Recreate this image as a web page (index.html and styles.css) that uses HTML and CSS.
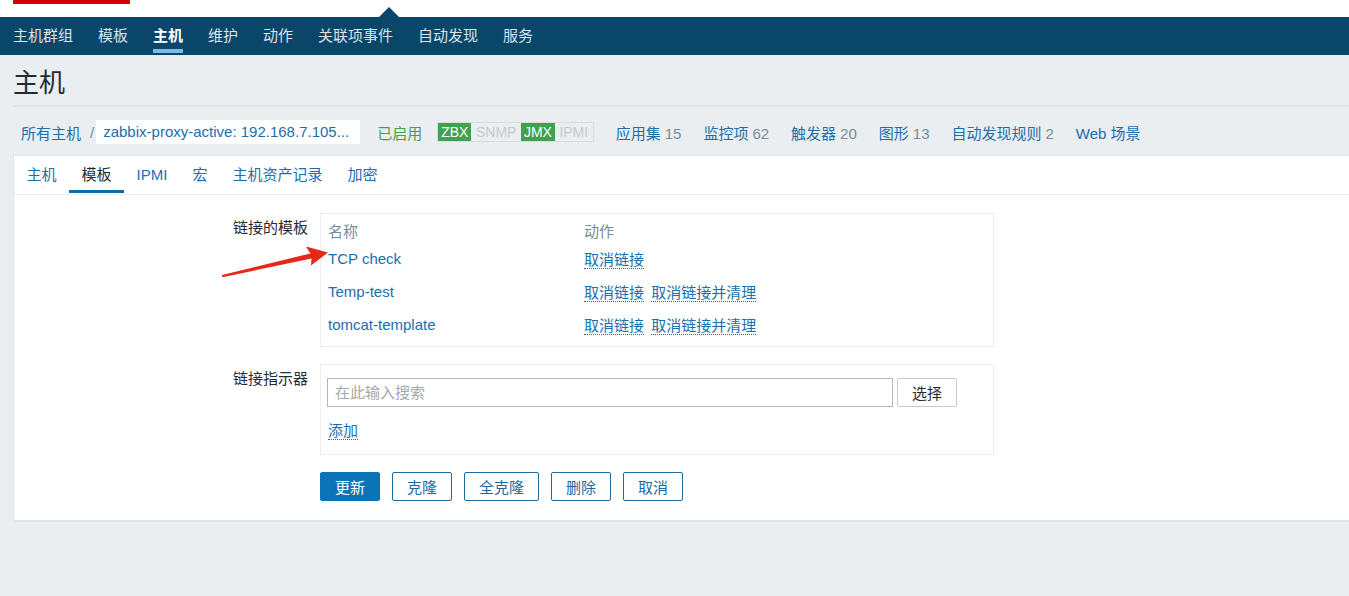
FILE: index.html
```html
<!DOCTYPE html>
<html lang="zh-CN">
<head>
  <meta charset="UTF-8" />
  <title>Zabbix - 主机</title>
  <link rel="stylesheet" href="styles.css">
</head>
<body>
  <div class="topbar">
    <div class="logo"></div>
    <div class="menu-pointer"></div>
  </div>

  <div class="nav">
    <a href="#">主机群组</a>
    <a href="#">模板</a>
    <a href="#" class="activo">主机</a>
    <a href="#">维护</a>
    <a href="#">动作</a>
    <a href="#">关联项事件</a>
    <a href="#">自动发现</a>
    <a href="#">服务</a>
  </div>

  <div class="header">
    <h1>主机</h1>
  </div>

  <div class="breadcrumbs">
    <a href="#" class="link">所有主机</a>
    <span class="sep">/</span>
    <span class="host-name">zabbix-proxy-active: 192.168.7.105...</span>
    <span class="estado">已启用</span>
    <span class="badges">
      <span class="badge on">ZBX</span><span class="badge">SNMP</span><span class="badge on">JMX</span><span class="badge">IPMI</span>
    </span>
    <a href="#" class="link item">应用集<span class="count">15</span></a>
    <a href="#" class="link item">监控项<span class="count">62</span></a>
    <a href="#" class="link item">触发器<span class="count">20</span></a>
    <a href="#" class="link item">图形<span class="count">13</span></a>
    <a href="#" class="link item">自动发现规则<span class="count">2</span></a>
    <a href="#" class="link item">Web 场景</a>
  </div>

  <div class="panel">
    <div class="tabs">
      <a href="#">主机</a>
      <a href="#" class="activo">模板</a>
      <a href="#">IPMI</a>
      <a href="#">宏</a>
      <a href="#">主机资产记录</a>
      <a href="#">加密</a>
    </div>

    <form class="form">
      <div class="form-row">
        <label class="form-label">链接的模板</label>
        <div class="box">
          <table class="tabla">
            <thead>
              <tr><th class="col-nombre">名称</th><th>动作</th></tr>
            </thead>
            <tbody>
              <tr>
                <td><a href="#" class="link">TCP check</a></td>
                <td><a href="#" class="accion">取消链接</a></td>
              </tr>
              <tr>
                <td><a href="#" class="link">Temp-test</a></td>
                <td><a href="#" class="accion">取消链接</a> <a href="#" class="accion">取消链接并清理</a></td>
              </tr>
              <tr>
                <td><a href="#" class="link">tomcat-template</a></td>
                <td><a href="#" class="accion">取消链接</a> <a href="#" class="accion">取消链接并清理</a></td>
              </tr>
            </tbody>
          </table>
        </div>
      </div>

      <div class="form-row">
        <label class="form-label">链接指示器</label>
        <div class="box box-buscar">
          <div class="buscar">
            <input type="text" placeholder="在此输入搜索">
            <button type="button" class="btn-elegir">选择</button>
          </div>
          <a href="#" class="accion agregar">添加</a>
        </div>
      </div>

      <div class="form-row">
        <span></span>
        <div class="botones">
          <button type="button" class="btn primario">更新</button>
          <button type="button" class="btn">克隆</button>
          <button type="button" class="btn">全克隆</button>
          <button type="button" class="btn">删除</button>
          <button type="button" class="btn">取消</button>
        </div>
      </div>
    </form>
  </div>

  <svg class="flecha" width="1349" height="596" viewBox="0 0 1349 596">
    <polygon points="222,275 310.5,253.4 306,246.5 328,252.5 311,265.5 311.5,258.6 222.5,277.2" fill="#e8271b" />
  </svg>
</body>
</html>
```

FILE: styles.css
```css
:root {
  --azul-nav: #0a466a;
  --azul-link: #1a6fae;
  --azul-boton: #0b74b8;
  --gris-fondo: #ebeef0;
  --gris-borde: #dfe4e7;
  --gris-texto: #768d99;
  --texto: #1f2c33;
  --verde: #3ea24e;
}

body {
  margin: 0;
  font-family: "Liberation Sans", "Noto Sans CJK SC", sans-serif;
  font-size: 15px;
  background-color: var(--gris-fondo);
  color: var(--texto);
  overflow: hidden;
}

a {
  text-decoration: none;
}

.topbar {
  height: 17px;
  background-color: #ffffff;
  position: relative;
}

.logo {
  margin-left: 13px;
  width: 117px;
  height: 4px;
  background-color: #d40000;
}

.menu-pointer {
  position: absolute;
  left: 379px;
  bottom: 0;
  width: 0;
  height: 0;
  border-left: 10px solid transparent;
  border-right: 10px solid transparent;
  border-bottom: 10px solid var(--azul-nav);
}

.nav {
  height: 38px;
  background-color: var(--azul-nav);
  display: flex;
  gap: 25px;
  padding-left: 13px;
}

.nav a {
  color: #dbe3e8;
  line-height: 38px;
  position: relative;
}

.nav a.activo {
  color: #ffffff;
  font-weight: bold;
}

.nav a.activo::after {
  content: "";
  position: absolute;
  left: 0;
  right: 0;
  bottom: 2px;
  height: 4px;
  background-color: #7cbbe6;
}

.header {
  margin-left: 13px;
  height: 50px;
  border-bottom: 2px solid var(--gris-borde);
}

h1 {
  margin: 0;
  padding-top: 6px;
  font-size: 26px;
  line-height: 44px;
  font-weight: normal;
  color: var(--texto);
}

.breadcrumbs {
  margin-left: 13px;
  height: 49px;
  display: flex;
  align-items: center;
  padding: 2px 0 0 8px;
  box-sizing: border-box;
  border-bottom: 1px solid var(--gris-borde);
  white-space: nowrap;
}

.link {
  color: var(--azul-link);
}

.sep {
  color: var(--gris-texto);
  margin: 0 2px 0 9px;
}

.host-name {
  background-color: #ffffff;
  color: var(--azul-link);
  height: 24px;
  line-height: 24px;
  width: 250px;
  padding: 0 7px;
  overflow: hidden;
  text-overflow: ellipsis;
}

.estado {
  color: var(--verde);
  margin-left: 17px;
}

.badges {
  display: flex;
  margin-left: 15px;
  border: 1px solid #d9dcdd;
  height: 18px;
  font-size: 14px;
  line-height: 18px;
}

.badge {
  padding: 0 4.5px;
  color: #c6cacc;
}

.badge.on {
  padding: 0 3px;
  background-color: var(--verde);
  color: #ffffff;
}

.item {
  margin-left: 22px;
}

.count {
  color: var(--gris-texto);
  margin-left: 4px;
}

.panel {
  margin-left: 13px;
  background-color: #ffffff;
  border-left: 1px solid var(--gris-borde);
  border-bottom: 2px solid var(--gris-borde);
}

.tabs {
  display: flex;
  height: 38px;
  border-bottom: 1px solid var(--gris-fondo);
}

.tabs a {
  padding: 0 12.5px;
  line-height: 38px;
  color: var(--azul-link);
  position: relative;
}

.tabs a.activo {
  color: var(--texto);
}

.tabs a.activo::after {
  content: "";
  position: absolute;
  left: 0;
  right: 0;
  bottom: 1px;
  height: 3px;
  background-color: #0f6ca6;
}

.form {
  padding: 18px 0 19px;
  display: flex;
  flex-direction: column;
  gap: 17px;
}

.form-row {
  display: grid;
  grid-template-columns: 294px 674px;
  column-gap: 12px;
}

.form-label {
  text-align: right;
  padding-top: 6px;
  line-height: 18px;
}

.box {
  border: 1px solid #eceff1;
  padding: 5px 7px;
}

.tabla {
  border-collapse: collapse;
  width: 100%;
}

.tabla th {
  text-align: left;
  font-weight: normal;
  color: var(--gris-texto);
  height: 23px;
  padding: 0;
}

.tabla .col-nombre {
  width: 256px;
}

.tabla td {
  height: 33px;
  padding: 0;
}

.accion {
  color: var(--azul-link);
  border-bottom: 1px dotted var(--azul-link);
  margin-right: 3px;
}

.box-buscar {
  padding: 13px 6px 14px;
}

.buscar {
  display: flex;
  gap: 4px;
}

.buscar input {
  width: 566px;
  height: 29px;
  box-sizing: border-box;
  border: 1px solid #b4b7b9;
  padding: 0 7px;
  font-family: inherit;
  font-size: 15px;
  color: var(--texto);
}

.buscar input::placeholder {
  color: #a3a9ac;
}

.btn-elegir {
  width: 60px;
  height: 29px;
  background-color: #ffffff;
  border: 1px solid #c8cbcd;
  border-radius: 2px;
  font-family: inherit;
  font-size: 15px;
  color: var(--texto);
}

.agregar {
  display: inline-block;
  margin-top: 15px;
  margin-left: 1px;
  line-height: 17px;
}

.botones {
  display: flex;
  gap: 12px;
}

.btn {
  height: 29px;
  padding: 0 14px;
  background-color: #ffffff;
  border: 1px solid #1e6aa0;
  border-radius: 2px;
  color: #1e6aa0;
  font-family: inherit;
  font-size: 15px;
  cursor: pointer;
}

.btn.primario {
  background-color: var(--azul-boton);
  border-color: var(--azul-boton);
  color: #ffffff;
}

.flecha {
  position: absolute;
  left: 0;
  top: 0;
  pointer-events: none;
}
```
